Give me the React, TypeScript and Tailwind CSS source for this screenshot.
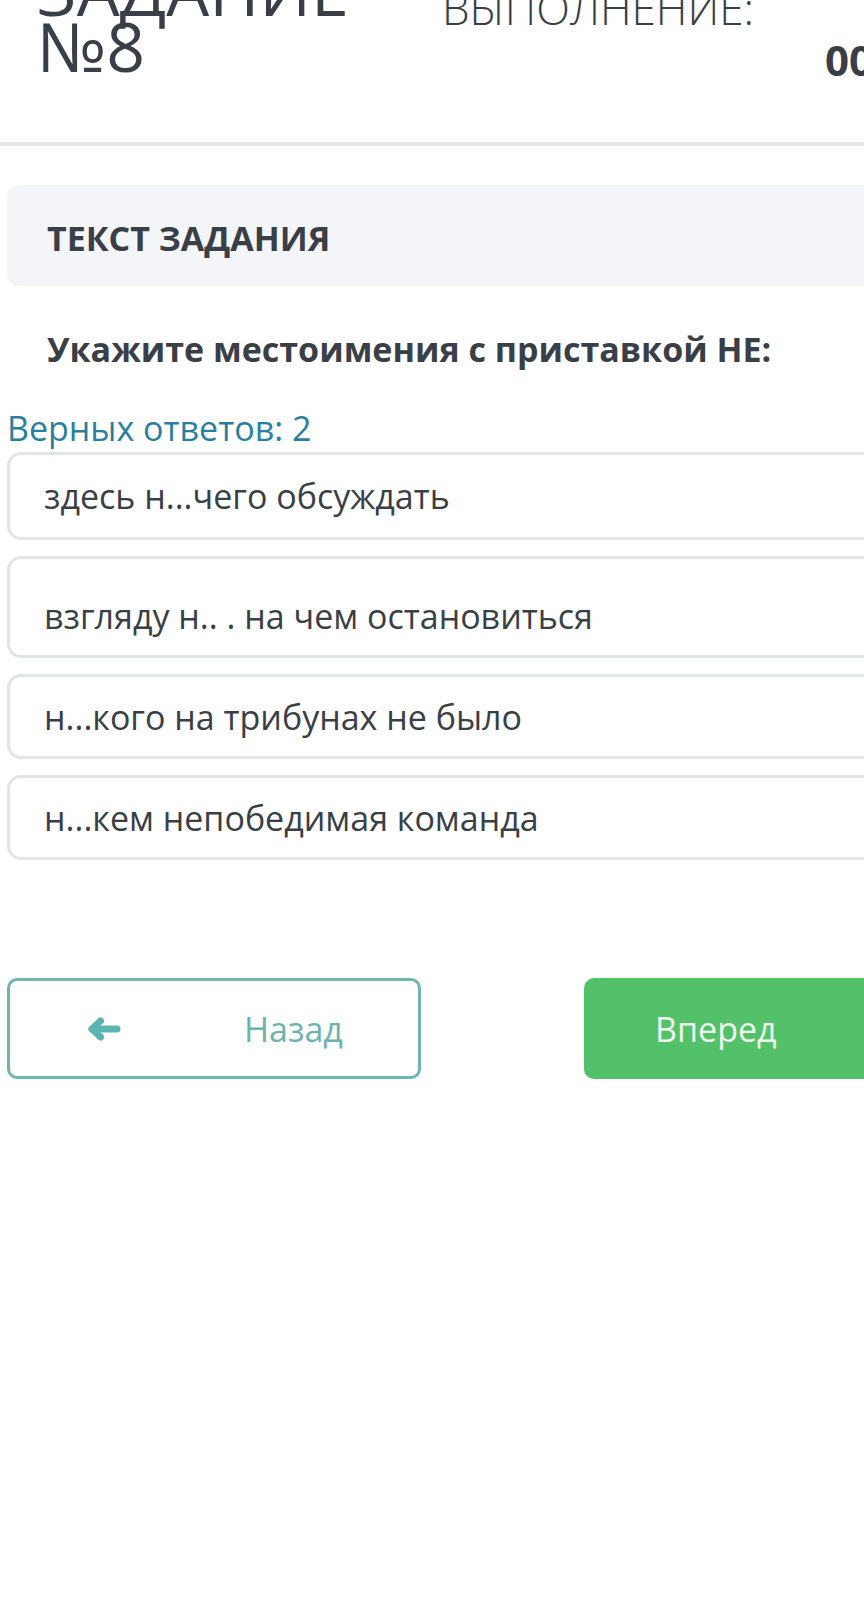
import React from 'react';

const options = [
  { text: 'здесь н...чего обсуждать', pad: 'pt-[21px] pb-[21px]' },
  { text: 'взгляду н.. . на чем остановиться', pad: 'pt-[37px] pb-[19px]' },
  { text: 'н...кого на трибунах не было', pad: 'pt-[20px] pb-[19px]' },
  { text: 'н...кем непобедимая команда', pad: 'pt-[20px] pb-[19px]' },
];

function BackArrow() {
  return (
    <svg width="33" height="24" viewBox="0 0 33 24" fill="none" stroke="#5ab5b0" strokeWidth="7" strokeLinecap="round" strokeLinejoin="round">
      <polyline points="12.5 4 4 12 12.5 20" />
      <line x1="4" y1="12" x2="29" y2="12" />
    </svg>
  );
}

export default function App() {
  return (
    <div className="w-[864px] h-[1611px] overflow-hidden bg-white text-[#3a3f47] font-['Open_Sans',sans-serif]">
      {/* Header, scrolled partly out of view */}
      <header className="-mt-[64px] h-[210px] w-[1005px] flex items-start border-b-[4px] border-[#e8e8e8]">
        <div className="w-[442px] pl-[37px] mt-[26px] text-[68px] leading-[56px]">
          <div className="font-medium">ЗАДАНИЕ</div>
          <div>№8</div>
        </div>
        <div className="w-[383px] text-[44px] leading-[48px] font-light whitespace-nowrap">
          <div>ВРЕМЯ НА</div>
          <div>ВЫПОЛНЕНИЕ:</div>
        </div>
        <div className="mt-[100px] text-[42px] leading-[48px] font-bold whitespace-nowrap">00:00:00</div>
      </header>

      <main className="w-[1005px] px-[7px]">
        <div className="mt-[39px] h-[101px] rounded-xl bg-[#f3f5f8] flex items-center pl-[40px] pt-[4px]">
          <span className="text-[34px] font-bold leading-[44px]">ТЕКСТ ЗАДАНИЯ</span>
        </div>

        <p className="mt-[41px] pl-[40px] text-[34px] font-bold leading-[44px]">
          Укажите местоимения с приставкой НЕ:
        </p>

        <p className="mt-[35px] text-[34px] leading-[44px] text-[#2a7f9f]">Верных ответов: 2</p>

        <div className="mt-[2px] flex flex-col gap-[16px]">
          {options.map((o) => (
            <div key={o.text} className={`border-[3px] border-[#e2e5e7] rounded-[14px] pl-[34px] ${o.pad}`}>
              <span className="text-[34px] leading-[40px]">{o.text}</span>
            </div>
          ))}
        </div>

        <div className="mt-[118px] flex gap-[163px]">
          <button className="w-[414px] h-[101px] border-[3px] border-[#6fb6b3] rounded-[10px] flex items-center pl-[78px] bg-white">
            <BackArrow />
            <span className="ml-[123px] text-[34px] leading-[40px] text-[#6db3b0]">Назад</span>
          </button>
          <button className="w-[414px] h-[101px] rounded-[10px] bg-[#52c16a] flex items-center pl-[71px]">
            <span className="text-[34px] leading-[40px] text-[#eef9ef]">Вперед</span>
          </button>
        </div>
      </main>
    </div>
  );
}
